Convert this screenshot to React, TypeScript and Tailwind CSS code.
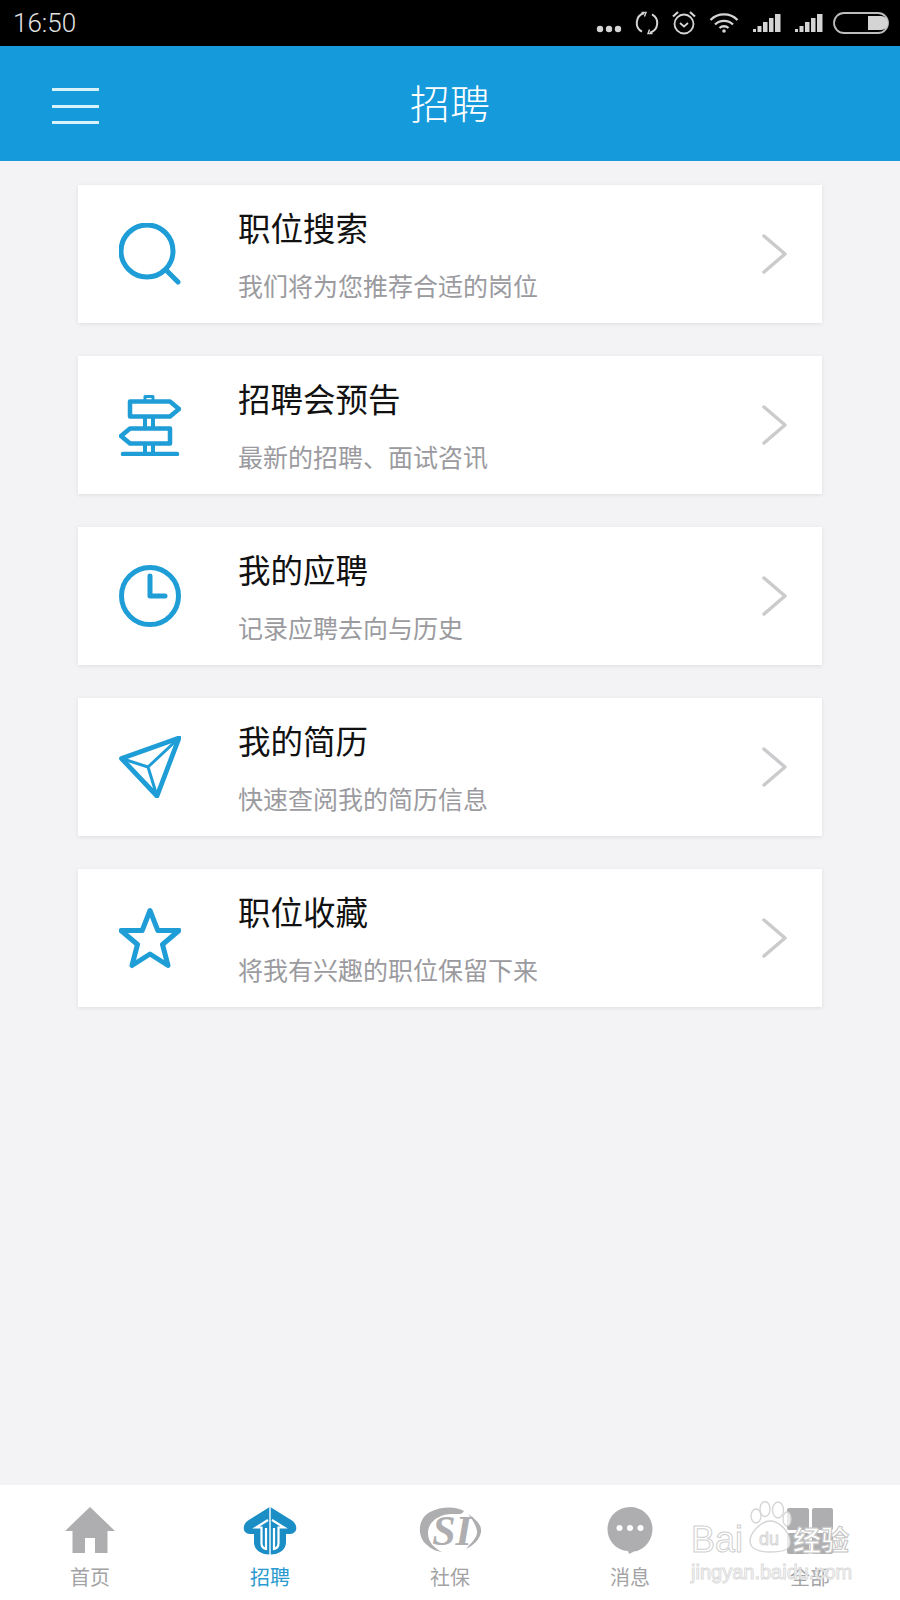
import React from "react";

const cjk = "font-['Noto_Sans_CJK_SC','Noto_Sans',sans-serif]";

function StatusIcons() {
  return (
    <div className="flex items-center text-[#d4d4d4]">
      <svg width="26" height="8" viewBox="0 0 26 8" className="mr-[13px] mt-[12px]" fill="currentColor">
        <circle cx="4" cy="4" r="3.2" /><circle cx="13" cy="4" r="3.2" /><circle cx="22" cy="4" r="3.2" />
      </svg>
      <svg width="24" height="24" viewBox="0 0 24 24" className="mr-[12px]" fill="none" stroke="currentColor" strokeWidth="2">
        <path d="M9 2.300A10 10 0 0 0 7 20.700" />
        <path d="M15 21.700A10 10 0 0 0 17 3.300" />
        <path d="M6.500 1.500 11 1.500 9.500 5.500M17.500 22.500 13 22.500 14.500 18.500" strokeWidth="1.400" />
      </svg>
      <svg width="26" height="26" viewBox="0 0 26 26" className="mr-[12px]" fill="none" stroke="currentColor" strokeWidth="1.800">
        <circle cx="13" cy="14" r="9.500" />
        <path d="M9 13l4 3.500 4-3.500" />
        <path d="M2 6.500 7 2M24 6.500 19 2" strokeWidth="2.200" />
      </svg>
      <svg width="30" height="20" viewBox="0 0 30 20" className="mr-[14px]" fill="none" stroke="currentColor" strokeWidth="2.400">
        <path d="M1.500 7a19 19 0 0 1 27 0" />
        <path d="M6 11.500a13 13 0 0 1 18 0" />
        <path d="M10.500 15a6.500 6.500 0 0 1 9 0" />
        <circle cx="15" cy="18" r="1.800" fill="currentColor" stroke="none" />
      </svg>
      <svg width="29" height="20" viewBox="0 0 29 20" className="mr-[13px]" fill="currentColor">
        <path d="M0 16h3v3H0zM4.500 13h4v6h-4zM10 9h4.500v10H10zM16 5h4.500v14H16zM22 1h5.500v18H22z" />
      </svg>
      <svg width="29" height="20" viewBox="0 0 29 20" className="mr-[9px]" fill="currentColor">
        <path d="M0 16h3v3H0zM4.500 13h4v6h-4zM10 9h4.500v10H10zM16 5h4.500v14H16zM22 1h5.500v18H22z" />
      </svg>
      <svg width="56" height="22" viewBox="0 0 56 22" fill="none">
        <rect x="1" y="1" width="54" height="20" rx="10" stroke="#bdbdbd" strokeWidth="1.800" />
        <path d="M35 4h13a7 7 0 0 1 0 14H35z" fill="currentColor" />
      </svg>
    </div>
  );
}

const blue = "#1f9dd6";

function SearchIcon() {
  return (
    <svg width="62" height="62" viewBox="0 0 62 62" fill="none" stroke={blue} strokeLinecap="round">
      <circle cx="28" cy="28" r="26" strokeWidth="5" />
      <path d="M47 47 59 59" strokeWidth="5" />
    </svg>
  );
}
function SignIcon() {
  return (
    <svg width="62" height="62" viewBox="0 0 62 62" fill="none" stroke={blue} strokeWidth="4.500" strokeLinejoin="round" strokeLinecap="round">
      <path d="M26 6V2.500h8V6" strokeWidth="3" />
      <path d="M11 7.500h40l9 7.500-9 7.500H11z" />
      <path d="M26 23v11M34 23v11" strokeWidth="4" />
      <path d="M51 34.500H11l-9 7.500 9 7.500h40z" />
      <path d="M26 50v9M34 50v9" strokeWidth="4" />
      <path d="M4 60h54" strokeWidth="4.500" />
    </svg>
  );
}
function ClockIcon() {
  return (
    <svg width="62" height="62" viewBox="0 0 62 62" fill="none" stroke={blue} strokeLinecap="round" strokeLinejoin="round">
      <circle cx="31" cy="31" r="28.500" strokeWidth="5" />
      <path d="M31 11v20h15" strokeWidth="5" />
    </svg>
  );
}
function PlaneIcon() {
  return (
    <svg width="62" height="62" viewBox="0 0 62 62" fill="none" stroke={blue} strokeLinecap="round" strokeLinejoin="round">
      <path d="M60 2 2.500 22.500 38 60z" strokeWidth="4.800" />
      <path d="M60 2 29 31M2.500 22.500 29 31M38 60 29 31" strokeWidth="3" />
    </svg>
  );
}
function StarIcon() {
  return (
    <svg width="62" height="62" viewBox="0 0 62 62" fill="none" stroke={blue} strokeWidth="5" strokeLinejoin="round">
      <path d="M31 3.500l7.800 20H60L43.500 37.500 49 58.500 31 47 13 58.500l5.500-21L2 23.500h21.200z" />
    </svg>
  );
}

const items = [
  { icon: <SearchIcon />, title: "职位搜索", sub: "我们将为您推荐合适的岗位" },
  { icon: <SignIcon />, title: "招聘会预告", sub: "最新的招聘、面试咨讯" },
  { icon: <ClockIcon />, title: "我的应聘", sub: "记录应聘去向与历史" },
  { icon: <PlaneIcon />, title: "我的简历", sub: "快速查阅我的简历信息" },
  { icon: <StarIcon />, title: "职位收藏", sub: "将我有兴趣的职位保留下来" },
];

function Card({ icon, title, sub }: { icon: React.ReactNode; title: string; sub: string }) {
  return (
    <div className="flex h-[138px] items-center bg-white pl-[41px] pr-[34px] shadow-[0_1px_4px_rgba(0,0,0,0.09)]">
      <div className="h-[62px] w-[62px] shrink-0">{icon}</div>
      <div className="ml-[57px] flex grow flex-col">
        <div className="h-[42px] text-[32.5px] leading-[42px] text-[#111111]">{title}</div>
        <div className="mt-[20px] h-[34px] text-[25px] leading-[34px] text-[#9b9b9f]">{sub}</div>
      </div>
      <svg width="26" height="40" viewBox="0 0 26 40" fill="none" stroke="#cbcbcd" strokeWidth="3.500" strokeLinecap="round" strokeLinejoin="round">
        <path d="M2 2l21 18L2 38" />
      </svg>
    </div>
  );
}

const gray = "#aeaeb0";
const halfFill = "M26.300 .3 5 13.500C-1 17.500 -1 27 7 27h4V35.300C11 43 18 47.500 26.300 47.500z";
const halfLine = "M25 13 13 20.500H18.500V36C18.500 40 20.500 41.500 23 42V21";

const tabs: { label: string; active?: boolean; icon: React.ReactNode }[] = [
  {
    label: "首页",
    icon: (
      <svg width="50" height="48" viewBox="0 0 50 48" fill={gray}>
        <path d="M25 0 50 24H42.500V46H30V31H20V46H7.500V24H0z" />
      </svg>
    ),
  },
  {
    label: "招聘",
    active: true,
    icon: (
      <svg width="54" height="48" viewBox="0 0 54 48">
        <path d={halfFill} fill="#1b8ec6" />
        <path d={halfLine} fill="none" stroke="#ffffff" strokeWidth="2.200" />
        <g transform="translate(54 0) scale(-1 1)">
          <path d={halfFill} fill="#1b8ec6" />
          <path d={halfLine} fill="none" stroke="#ffffff" strokeWidth="2.200" />
        </g>
      </svg>
    ),
  },
  {
    label: "社保",
    icon: (
      <svg width="64" height="48" viewBox="0 0 64 48">
        <path d="M46 4C38 -.5 24 -1 12 5 -1 12 -1 30 9 38c3 3 8 6 15 7-8-4-14-10-14-19C10 13 24 6 36 7c5 0 8 1 10-3z" fill={gray} />
        <path d="M50 7C58 12 64 18 63 25 62 32 56 38 48 42 53 36 60 30 59 24 58 18 54 12 50 7z" fill={gray} />
        <text x="34" y="38" textAnchor="middle" fontFamily="Liberation Serif, serif" fontWeight="700" fontStyle="italic" fontSize="42" fill={gray}>SI</text>
      </svg>
    ),
  },
  {
    label: "消息",
    icon: (
      <svg width="46" height="48" viewBox="0 0 46 48" fill={gray}>
        <path d="M23 0C35.500 0 45.500 9.500 45.500 22S35.500 44 27 44.500L22 47 21 44C9.500 43.500 .5 34 .5 22S10.500 0 23 0z" />
        <circle cx="12.500" cy="21" r="3" fill="#fff" /><circle cx="23" cy="21" r="3" fill="#fff" /><circle cx="33.500" cy="21" r="3" fill="#fff" />
      </svg>
    ),
  },
  {
    label: "全部",
    icon: (
      <div className="grid h-[46px] w-[46px] grid-cols-2 gap-[3px]">
        <div className="rounded-[2px] bg-[#aeaeb0]" /><div className="rounded-[2px] bg-[#aeaeb0]" />
        <div className="rounded-[2px] bg-[#aeaeb0]" /><div className="rounded-[2px] bg-[#aeaeb0]" />
      </div>
    ),
  },
];

function Watermark() {
  return (
    <div className="absolute left-[691px] top-[1503px] w-[170px]">
      <div className="flex h-[50px] items-end whitespace-nowrap">
        <span className="mb-[-5px] w-[56px] shrink-0 font-['Liberation_Sans',sans-serif] text-[36px] leading-[36px] text-white/80 [-webkit-text-stroke:1px_#d0d0d0]">Bai</span>
        <svg width="46" height="52" viewBox="0 0 46 52" className="shrink-0" fill="rgba(255,255,255,0.75)" stroke="#d4d4d4" strokeWidth="1.300">
          <ellipse cx="9" cy="15" rx="5" ry="7" />
          <ellipse cx="18" cy="8" rx="5" ry="7.500" />
          <ellipse cx="31" cy="9" rx="5.500" ry="8" />
          <ellipse cx="40" cy="18" rx="4" ry="7" />
          <path d="M3 40C3 32 14 20 23 20s19 10 20 20-9 11-20 11S3 48 3 40z" />
          <text x="22" y="44" textAnchor="middle" fontFamily="Liberation Sans, sans-serif" fontSize="18" fill="#eeeeee" strokeWidth="0.800">du</text>
        </svg>
        <span className={`${cjk} w-[58px] shrink-0 text-[28px] font-bold leading-[28px] text-white [-webkit-text-stroke:1px_#c4c4c4]`}>经验</span>
      </div>
      <div className="mt-[8px] whitespace-nowrap font-['Liberation_Sans',sans-serif] text-[20px] leading-[22px] text-white/70 [-webkit-text-stroke:1px_#dcdcdc]">jingyan.baidu.com</div>
    </div>
  );
}

export default function App() {
  return (
    <div className={`${cjk} relative flex h-[1600px] w-[900px] flex-col overflow-hidden bg-[#f3f2f5]`}>
      <div className="flex h-[46px] shrink-0 items-center justify-between bg-black pl-[13px] pr-[11px]">
        <span className="font-['Roboto',sans-serif] text-[26px] font-light leading-[46px] text-[#e2e2e2]">16:50</span>
        <StatusIcons />
      </div>
      <div className="relative flex h-[115px] shrink-0 items-center justify-center bg-[#159adc]">
        <div className="absolute left-[52px] top-[42px] flex w-[47px] flex-col gap-[13.5px]">
          <div className="h-[3px] bg-[#d8f2fb]" />
          <div className="h-[3px] bg-[#d8f2fb]" />
          <div className="h-[3px] bg-[#d8f2fb]" />
        </div>
        <span className="mb-[4px] text-[40px] font-light leading-[52px] text-white">招聘</span>
      </div>
      <div className="mx-[78px] mt-[24px] flex grow flex-col gap-[33px]">
        {items.map((it) => (
          <Card key={it.title} {...it} />
        ))}
      </div>
      <div className="grid h-[115px] shrink-0 grid-cols-5 bg-white pt-[22px]">
        {tabs.map((t) => (
          <div key={t.label} className="flex flex-col items-center">
            <div className="flex h-[48px] items-center justify-center">{t.icon}</div>
            <div className={`mt-[8px] text-[20px] leading-[28px] ${t.active ? "text-[#2a9ad0]" : "text-[#a3a3a5]"}`}>{t.label}</div>
          </div>
        ))}
      </div>
      <Watermark />
    </div>
  );
}
